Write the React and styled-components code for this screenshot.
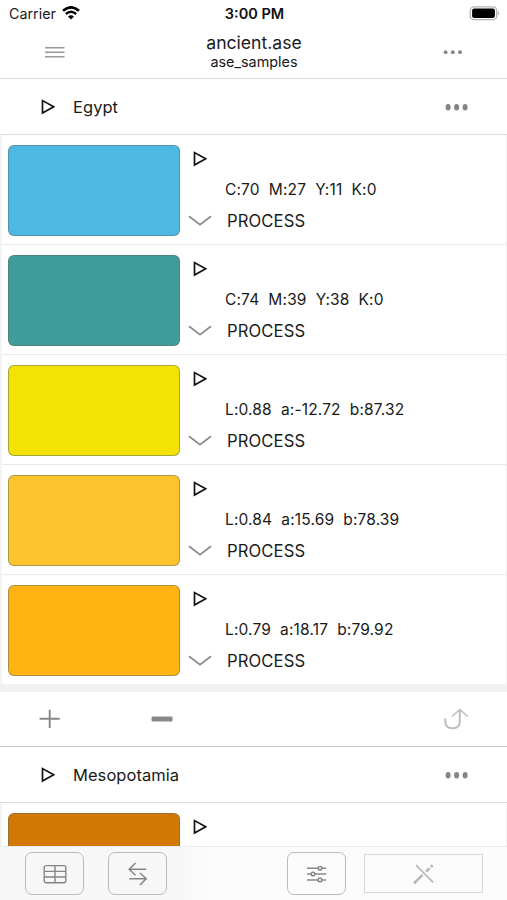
import React from "react";
import styled, { createGlobalStyle } from "styled-components";

const egypt = [
  { color: "#4cb8e3", values: "C:70  M:27  Y:11  K:0", process: "PROCESS" },
  { color: "#409b9b", values: "C:74  M:39  Y:38  K:0", process: "PROCESS" },
  { color: "#f3e203", values: "L:0.88  a:-12.72  b:87.32", process: "PROCESS" },
  { color: "#ffc32e", values: "L:0.84  a:15.69  b:78.39", process: "PROCESS" },
  { color: "#ffb413", values: "L:0.79  a:18.17  b:79.92", process: "PROCESS" },
];

const mesopotamia = [{ color: "#d27805" }];

const PlayIcon = () => (
  <svg width="14" height="16" viewBox="0 0 14 16" fill="none">
    <path d="M1.5 1.6V14L12.7 7.8Z" stroke="#111" strokeWidth="1.7" />
  </svg>
);

const ChevronIcon = () => (
  <svg width="24" height="12" viewBox="0 0 24 12" fill="none">
    <path d="M1 1.2L12 9.6L23 1.2" stroke="#8c8c8c" strokeWidth="1.8" />
  </svg>
);

const WifiIcon = () => (
  <svg width="18" height="14" viewBox="0 0 18 14" fill="none">
    <path d="M1 4.8Q9-2.2 17 4.8" stroke="#000" strokeWidth="2.6" />
    <path d="M3.8 8Q9 3.6 14.2 8" stroke="#000" strokeWidth="2.3" />
    <path d="M6 10.4Q9 8 12 10.4L9 13.6Z" fill="#000" />
  </svg>
);

const BatteryIcon = () => (
  <svg width="31" height="15" viewBox="0 0 31 15">
    <rect x="1.3" y="0.8" width="26.4" height="12.9" rx="3.8" fill="#fff" stroke="#b3b3b3" strokeWidth="1.3" />
    <rect x="3.1" y="2.6" width="22.8" height="9.3" rx="2" fill="#000" />
    <path d="M28.8 4.8Q31.2 7.2 28.8 9.6Z" fill="#aaa" />
  </svg>
);

const MenuIcon = () => (
  <svg width="20" height="12" viewBox="0 0 20 12">
    <path d="M0 1.7H19.5M0 6.2H19.5M0 10.7H19.5" stroke="#999" strokeWidth="1.5" />
  </svg>
);

const SmallDots = () => (
  <svg width="20" height="6" viewBox="0 0 20 6" fill="#858585">
    <circle cx="2.6" cy="3.2" r="1.9" />
    <circle cx="9.8" cy="3.2" r="1.9" />
    <circle cx="17" cy="3.2" r="1.9" />
  </svg>
);

const Dots = () => (
  <svg width="24" height="8" viewBox="0 0 24 8" fill="#858585">
    <ellipse cx="3.1" cy="4.3" rx="2.5" ry="3.3" />
    <ellipse cx="11.6" cy="4.3" rx="2.5" ry="3.3" />
    <ellipse cx="20.1" cy="4.3" rx="2.5" ry="3.3" />
  </svg>
);

const PlusIcon = () => (
  <svg width="22" height="20" viewBox="0 0 22 20">
    <path d="M0.6 9.8H20.8M10.7 0.8V19" stroke="#888" strokeWidth="1.9" />
  </svg>
);

const MinusIcon = () => (
  <svg width="22" height="6" viewBox="0 0 22 6">
    <rect x="0.6" y="0.6" width="20.9" height="4.8" rx="1" fill="#888" />
  </svg>
);

const MoveUpIcon = () => (
  <svg width="25" height="22" viewBox="0 0 25 22" fill="none" stroke="#bdbdbd" strokeWidth="2">
    <path d="M1.3 10.3V13.5Q1.3 20.3 8.6 20.3Q15.8 20.3 15.8 13.5V1.5" />
    <path d="M8 8.5L15.8 1.5L23.8 8.5" strokeWidth="1.6" />
  </svg>
);

const TableIcon = () => (
  <svg width="24" height="20" viewBox="0 0 24 20" fill="none" stroke="#858585" strokeWidth="1.4">
    <rect x="1.2" y="1.6" width="21.6" height="17.2" rx="2" />
    <path d="M1.2 7.4H22.8M1.2 13H22.8M12 1.6V18.8" />
  </svg>
);

const SwapIcon = () => (
  <svg width="20" height="24" viewBox="0 0 20 24" fill="none" stroke="#858585" strokeWidth="1.5">
    <path d="M18.2 7.3H1.2M7.5 1L1.2 7.3L7.5 13.2" />
    <path d="M1.2 16.8H18.2M11.9 11L18.2 16.8L11.9 23" />
  </svg>
);

const SlidersIcon = () => (
  <svg width="20" height="18" viewBox="0 0 20 18" fill="#fcfcfc" stroke="#888" strokeWidth="1.5">
    <path d="M0 3.2H19.2M0 9H19.2M0 14.9H19.2" />
    <circle cx="13" cy="3.2" r="1.8" />
    <circle cx="6" cy="9" r="1.8" />
    <circle cx="13" cy="14.9" r="1.8" />
  </svg>
);

const NoEditIcon = () => (
  <svg width="22" height="22" viewBox="0 0 22 22" fill="none" stroke="#b8b8b8">
    <path d="M3 2.2L20.2 19.4" strokeWidth="1.7" />
    <path d="M2.6 18.6L9.6 11.9M13 8.6L16.6 5.2" strokeWidth="2.6" />
    <path d="M1.2 20.6L3.2 18M17.8 4L19.6 2.2" strokeWidth="2.8" />
  </svg>
);

const Swatch = ({ color, values, process }) => (
  <Row>
    <ColorBox $color={color} />
    <Details>
      <IconCell>
        <PlayIcon />
      </IconCell>
      <span />
      {values && (
        <>
          <span />
          <Values>{values}</Values>
          <IconCell>
            <ChevronIcon />
          </IconCell>
          <Process>{process}</Process>
        </>
      )}
    </Details>
  </Row>
);

const Group = ({ name }) => (
  <GroupHeader>
    <PlayIcon />
    <GroupName>{name}</GroupName>
    <Dots />
  </GroupHeader>
);

const App = () => {
  return (
    <Screen>
      <GlobalStyle />
      <StatusBar>
        <Carrier>
          Carrier <WifiIcon />
        </Carrier>
        <Time>3:00 PM</Time>
        <Battery>
          <BatteryIcon />
        </Battery>
      </StatusBar>
      <NavBar>
        <MenuIcon />
        <Titles>
          <Title>ancient.ase</Title>
          <Subtitle>ase_samples</Subtitle>
        </Titles>
        <SmallDots />
      </NavBar>
      <Content>
        <Group name="Egypt" />
        <List>
          {egypt.map((item) => (
            <Swatch key={item.color} {...item} />
          ))}
        </List>
        <Spacer />
        <GroupFooter>
          <PlusIcon />
          <MinusIcon />
          <MoveUpIcon />
        </GroupFooter>
        <Group name="Mesopotamia" />
        <List>
          {mesopotamia.map((item) => (
            <Swatch key={item.color} {...item} />
          ))}
        </List>
      </Content>
      <Toolbar>
        <ToolGroup>
          <ToolButton>
            <TableIcon />
          </ToolButton>
          <ToolButton>
            <SwapIcon />
          </ToolButton>
        </ToolGroup>
        <ToolGroup $gap="18px">
          <ToolButton>
            <SlidersIcon />
          </ToolButton>
          <EditButton>
            <NoEditIcon />
          </EditButton>
        </ToolGroup>
      </Toolbar>
    </Screen>
  );
};

const GlobalStyle = createGlobalStyle`
  * {
    box-sizing: border-box;
  }
  body {
    margin: 0;
    background: #fff;
    color: #1a1a1a;
    font-family: Inter, "Liberation Sans", sans-serif;
  }
  svg {
    display: block;
    flex-shrink: 0;
  }
`;
const Screen = styled.div`
  width: 100%;
  height: 100vh;
  display: flex;
  flex-direction: column;
  overflow: hidden;
`;
const StatusBar = styled.div`
  height: 27px;
  flex-shrink: 0;
  display: grid;
  grid-template-columns: 1fr auto 1fr;
  align-items: center;
  padding: 0 7px 0 9px;
`;
const Carrier = styled.div`
  display: flex;
  align-items: center;
  gap: 6px;
  font-size: 14.3px;
  svg {
    margin-top: -1px;
  }
`;
const Time = styled.div`
  font-size: 14.5px;
  font-weight: 600;
  color: #111;
`;
const Battery = styled.div`
  display: flex;
  justify-content: flex-end;
`;
const NavBar = styled.div`
  height: 52px;
  flex-shrink: 0;
  display: flex;
  align-items: center;
  justify-content: space-between;
  padding: 0 44px 2px 45px;
  border-bottom: 1px solid #d8d8d8;
`;
const Titles = styled.div`
  text-align: center;
`;
const Title = styled.div`
  font-size: 17.6px;
  line-height: 21px;
`;
const Subtitle = styled.div`
  font-size: 14.4px;
  line-height: 18px;
`;
const Content = styled.div`
  flex: 1;
  min-height: 0;
  overflow: hidden;
`;
const GroupHeader = styled.div`
  height: 56px;
  display: flex;
  align-items: center;
  padding: 0 38px 0 41px;
  border-bottom: 1px solid #dcdcde;
`;
const GroupName = styled.div`
  flex: 1;
  margin-left: 18px;
  font-size: 16.5px;
  letter-spacing: 0.05px;
`;
const List = styled.div`
  border: solid #f3f3f6;
  border-width: 0 1px 0 2px;
`;
const Row = styled.div`
  height: 110px;
  display: flex;
  padding: 10px 0 0 6px;
  border-bottom: 1px solid #e9e9ec;
  &:last-child {
    height: 109px;
    border-bottom: none;
  }
`;
const ColorBox = styled.div`
  width: 172px;
  height: 91px;
  border: 1px solid rgba(90, 110, 100, 0.5);
  border-radius: 6px;
  background: ${(props) => props.$color};
`;
const Details = styled.div`
  display: grid;
  grid-template-columns: 40px 1fr;
  grid-template-rows: 28px 32px 32px;
  align-items: center;
`;
const IconCell = styled.div`
  display: flex;
  justify-content: center;
`;
const Values = styled.div`
  margin-left: 5px;
  font-size: 15.5px;
  letter-spacing: 0.16px;
  white-space: pre;
`;
const Process = styled.div`
  margin-left: 7px;
  font-size: 16.6px;
  letter-spacing: 0.12px;
`;
const Spacer = styled.div`
  height: 8px;
  background: #f1f1f3;
`;
const GroupFooter = styled.div`
  height: 55px;
  display: flex;
  align-items: center;
  padding: 0 38px 0 39px;
  border-bottom: 1px solid #c8c8c8;
  svg:nth-child(2) {
    margin: 0 auto 0 90px;
  }
`;
const Toolbar = styled.div`
  height: 54px;
  flex-shrink: 0;
  display: flex;
  align-items: center;
  justify-content: space-between;
  padding: 0 24px 0 25px;
  border-top: 1px solid #ececef;
  background: linear-gradient(90deg, #f7f7f7 0 35%, #fcfcfc 42%);
`;
const ToolGroup = styled.div`
  display: flex;
  align-items: center;
  gap: ${(props) => props.$gap || "24px"};
`;
const ToolButton = styled.div`
  width: 59px;
  height: 43px;
  display: flex;
  align-items: center;
  justify-content: center;
  border: 1px solid #bcbcbc;
  border-radius: 7px;
`;
const EditButton = styled.div`
  width: 119px;
  height: 39px;
  display: flex;
  align-items: center;
  justify-content: center;
  border: 1px solid #d8d8d8;
`;

export default App;
